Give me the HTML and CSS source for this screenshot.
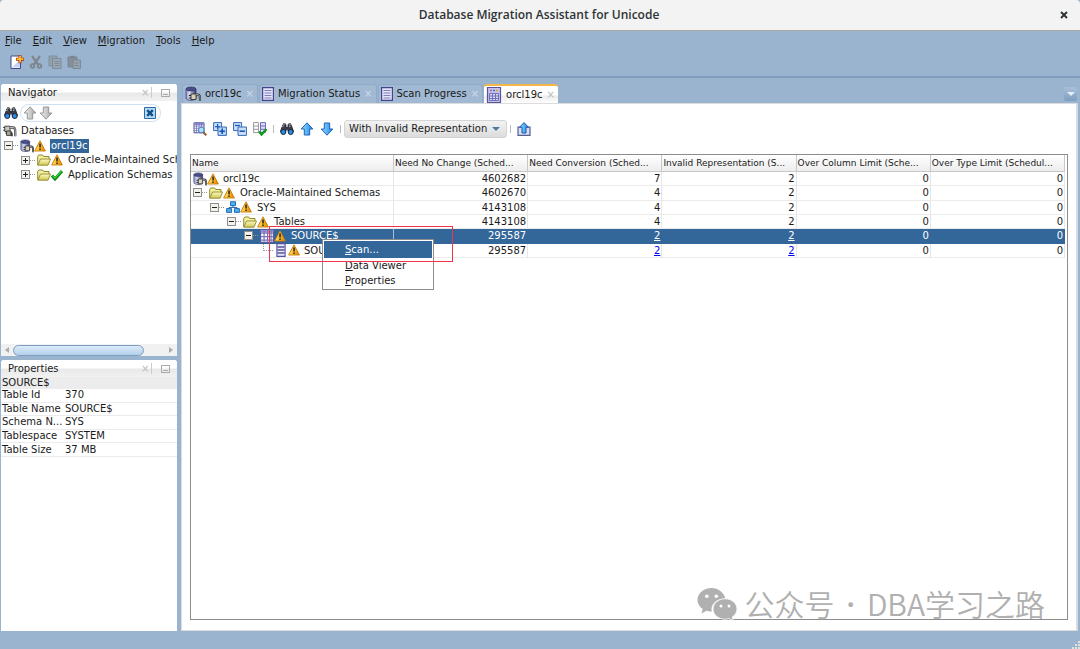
FILE: index.html
```html
<!DOCTYPE html>
<html lang="en">
<head>
  <meta charset="UTF-8">
  <title>Database Migration Assistant for Unicode</title>
  <link rel="stylesheet" href="styles.css">
</head>
<body>
  <!-- icon set -->
  <svg class="sprite" aria-hidden="true">
    <defs>
      <linearGradient id="gFolder" x1="0" y1="0" x2="0" y2="1">
        <stop offset="0" stop-color="#fdfbc4"/><stop offset="1" stop-color="#cfc653"/>
      </linearGradient>
      <linearGradient id="gWarn" x1="0" y1="0" x2="1" y2="0">
        <stop offset="0" stop-color="#ffe277"/><stop offset=".5" stop-color="#fbb81e"/><stop offset="1" stop-color="#d98300"/>
      </linearGradient>
      <linearGradient id="gBlue" x1="0" y1="0" x2="1" y2="0">
        <stop offset="0" stop-color="#9fdcff"/><stop offset="1" stop-color="#1787ea"/>
      </linearGradient>
      <linearGradient id="gDb" x1="0" y1="0" x2="1" y2="0">
        <stop offset="0" stop-color="#8f94cf"/><stop offset=".35" stop-color="#d5d8f2"/><stop offset="1" stop-color="#31356f"/>
      </linearGradient>
      <linearGradient id="gGray" x1="0" y1="0" x2="1" y2="0">
        <stop offset="0" stop-color="#f4f4f4"/><stop offset="1" stop-color="#a6a6a6"/>
      </linearGradient>
    </defs>
    <symbol id="db" viewBox="0 0 16 16">
      <path d="M1 3v9c0 3 10 3 10 0V3z" fill="url(#gDb)" stroke="#3c3f73" stroke-width=".8"/>
      <ellipse cx="6" cy="3" rx="5" ry="2" fill="#4a4f8c" stroke="#30335f" stroke-width=".7"/>
      <path d="M11 8.500h2c2 0 2 2 2 6.500" fill="none" stroke="#333" stroke-width="2.200"/>
      <path d="M6 8h5v5.500H6z" fill="#d8d2b6" stroke="#333" stroke-width=".9"/>
      <path d="M4 9.500h2M4 12h2" stroke="#222" stroke-width="1"/>
      <path d="M11 8.500h2c2 0 2 2 2 6.500" fill="none" stroke="#bbb" stroke-width=".7"/>
    </symbol>
    <symbol id="plugs" viewBox="0 0 16 14">
      <path d="M0 3h2M0 6h2M2 1.500h6v6H2z" fill="#c9c9bd" stroke="#333"/>
      <path d="M8 3h4c2 0 2 2 2 10M3 9h5c2 0 2 1 2 4" fill="none" stroke="#444" stroke-width="2.600"/>
      <path d="M8 3h4c2 0 2 2 2 10" fill="none" stroke="#ccc" stroke-width="1"/>
      <path d="M4 7h5v5H4z" fill="#aaa89d" stroke="#333"/>
    </symbol>
    <symbol id="warn" viewBox="0 0 12 12">
      <path d="M6 .8L11.400 11H.6z" fill="url(#gWarn)" stroke="#c77c0c" stroke-width=".9" stroke-linejoin="round"/>
      <path d="M5.300 3.600h1.500v4H5.300zM5.300 8.500h1.500V10H5.300z" fill="#22222c"/>
    </symbol>
    <symbol id="folder" viewBox="0 0 14 12">
      <path d="M.7 10.800V2.500l1-1.500h4l1 1.500H12v3" fill="#f3efa0" stroke="#8f8a2c"/>
      <path d="M.8 11.200L3.500 5H13.500L11 11.200z" fill="url(#gFolder)" stroke="#8f8a2c" stroke-width=".9"/>
    </symbol>
    <symbol id="check" viewBox="0 0 12 12">
      <path d="M1 6.500l3 3.500L11 2" fill="none" stroke="#0a8a12" stroke-width="3"/>
      <path d="M1.500 6.500L4 9.200 10.500 2" fill="none" stroke="#35d23c" stroke-width="1.200"/>
    </symbol>
    <symbol id="schema" viewBox="0 0 14 12">
      <path d="M7 4v3M3 9V6.500h8V9" fill="none" stroke="#356fa8"/>
      <path d="M4.500.7h5v4h-5zM.6 7.600h5v3.800h-5zM8.400 7.600h5v3.800h-5z" fill="#49b0f5" stroke="#1b62aa" stroke-width=".9"/>
    </symbol>
    <symbol id="table" viewBox="0 0 12 12">
      <path d="M.5.500h11v11H.5z" fill="#fff" stroke="#5c5aa6"/>
      <path d="M.5 1h11v2H.5z" fill="#8e8bd0"/>
      <path d="M3.500 1v10M6.500 1v10M9.500 1v10M1 3.500h10M1 6.500h10M1 9.500h10" stroke="#7472b8"/>
    </symbol>
    <symbol id="column" viewBox="0 0 10 12">
      <path d="M1.500.500h7v11h-7z" fill="#e9e9ff" stroke="#55549c"/>
      <path d="M2 3.500h6M2 6h6M2 8.500h6" stroke="#55549c" stroke-width="1.300"/>
    </symbol>
    <symbol id="doc" viewBox="0 0 12 14">
      <path d="M.6.600h10.800v12.800H.6z" fill="#e4e4fb" stroke="#45448a" stroke-width="1.200"/>
      <path d="M2.500 3.500h7M2.500 6h7M2.500 8.500h7M2.500 11h7" stroke="#7f7db8"/>
    </symbol>
    <symbol id="report" viewBox="0 0 16 16">
      <path d="M1.500.500h13v15h-13z" fill="#c4c4ee" stroke="#55549c" stroke-width="1.200"/>
      <path d="M4 3.500h2" stroke="#d2568a" stroke-width="1.500"/><path d="M7 3.500h2" stroke="#3a77d6" stroke-width="1.500"/><path d="M10 3.500h2" stroke="#d99b2b" stroke-width="1.500"/>
      <path d="M3.500 6.500h9v7h-9zM6.500 6.500v7M9.500 6.500v7M4 9h8M4 11.500h8" fill="#d9d9f8" stroke="#6a68b0" stroke-width=".9"/>
    </symbol>
    <symbol id="binoculars" viewBox="0 0 14 14">
      <path d="M3 2.500h3v3h2v-3h3l2.600 7H8.200L7.500 7h-1L5.800 9.500H.4z" fill="#3a3f49" stroke="#1d2028" stroke-width=".8"/>
      <path d="M3 1h2.500v2H3zM8.500 1H11v2H8.500z" fill="#777"/>
      <path d="M2.600 5l.8-1.500M9.500 5l.4-1.500" stroke="#ccc"/>
      <circle cx="3.300" cy="10" r="2.500" fill="#248df0" stroke="#20242c"/>
      <circle cx="10.700" cy="10" r="2.500" fill="#248df0" stroke="#20242c"/>
    </symbol>
    <symbol id="up" viewBox="0 0 14 14">
      <path d="M7 .8L12.800 7H9.700v6H4.300V7H1.200z" fill="url(#gBlue)" stroke="#1b64b5" stroke-linejoin="round"/>
    </symbol>
    <symbol id="down" viewBox="0 0 14 14">
      <path d="M7 13.200L1.200 7h3.100V1h5.400v6h3.100z" fill="url(#gBlue)" stroke="#1b64b5" stroke-linejoin="round"/>
    </symbol>
    <symbol id="upGray" viewBox="0 0 14 14">
      <path d="M7 .8L12.800 7H9.700v6H4.300V7H1.200z" fill="url(#gGray)" stroke="#979797" stroke-linejoin="round"/>
    </symbol>
    <symbol id="downGray" viewBox="0 0 14 14">
      <path d="M7 13.200L1.200 7h3.100V1h5.400v6h3.100z" fill="url(#gGray)" stroke="#979797" stroke-linejoin="round"/>
    </symbol>
    <symbol id="clear" viewBox="0 0 12 12">
      <path d="M.5.500h11v11H.5z" fill="#b6daf5" stroke="#2c6aa5"/>
      <path d="M3.200 3.200l5.600 5.600M8.800 3.200L3.200 8.800" stroke="#114f8c" stroke-width="2.400"/>
    </symbol>
    <symbol id="new" viewBox="0 0 14 14">
      <path d="M1 1h9.500v12.500H1z" fill="#fff" stroke="#3f4a8e"/>
      <path d="M2 12.500l8-8v8z" fill="#c9d3f1"/>
      <path d="M10 .2v8M6 4.200h8" stroke="#a32a10" stroke-width="3"/>
      <path d="M10 .8v6.800M6.600 4.200h6.800" stroke="#ffc22e" stroke-width="1.700"/>
    </symbol>
    <symbol id="cut" viewBox="0 0 14 14">
      <path d="M3 1l6.500 9M11 1L4.500 10" stroke="#7d858d" stroke-width="2.200" fill="none"/>
      <circle cx="3.500" cy="11" r="1.800" fill="none" stroke="#7d858d" stroke-width="1.800"/>
      <circle cx="10.500" cy="11" r="1.800" fill="none" stroke="#7d858d" stroke-width="1.800"/>
    </symbol>
    <symbol id="copy" viewBox="0 0 14 14">
      <path d="M1 1h8v10H1z" fill="#93a0ad" stroke="#8090a0"/>
      <path d="M4.500 3.500H13v10H4.500z" fill="#9aa6b2" stroke="#7e8b98"/>
      <path d="M6.500 6.500h5M6.500 8.500h5M6.500 10.500h5" stroke="#7e8b98"/>
    </symbol>
    <symbol id="paste" viewBox="0 0 14 14">
      <path d="M1 2h9v10H1z" fill="#838f9b" stroke="#7b8792"/><path d="M3.500.800h4v2h-4z" fill="#77828d"/>
      <path d="M6 5h7.400v8.500H6z" fill="#98a4b0" stroke="#7b8792"/>
      <path d="M7.500 8h4M7.500 10.500h4" stroke="#7b8792"/>
    </symbol>
    <symbol id="tableFind" viewBox="0 0 14 14">
      <path d="M1 .8h10v10H1z" fill="#fff" stroke="#4d4b98"/><path d="M1 2h10" stroke="#8e8bd0" stroke-width="2"/>
      <path d="M3.500 1v10M6 1v10M8.500 1v10M1 4h10M1 6.300h10M1 8.600h10" stroke="#7472b8" stroke-width=".8"/>
      <path d="M10 10l3.300 3.300" stroke="#9a5a28" stroke-width="2"/>
      <circle cx="8.300" cy="8" r="2.800" fill="#b5def9" stroke="#3d83c6"/>
    </symbol>
    <symbol id="expand" viewBox="0 0 14 14">
      <path d="M.6.600h8v8h-8z" fill="#c9e1fb" stroke="#3566b4"/>
      <path d="M4.600 2v5M2 4.600h5" stroke="#1d5bb8" stroke-width="1.300"/>
      <path d="M5 5h8.400v8.400H5z" fill="#b7d8fb" stroke="#3566b4"/>
      <path d="M9.200 6.500v5.400M6.500 9.200h5.400" stroke="#134fae" stroke-width="1.500"/>
    </symbol>
    <symbol id="collapse" viewBox="0 0 14 14">
      <path d="M.6.600h8v8h-8z" fill="#c9e1fb" stroke="#3566b4"/>
      <path d="M2 3.500h5" stroke="#1d5bb8" stroke-width="1.300"/>
      <path d="M5 5h8.400v8.400H5z" fill="#c7e1fc" stroke="#3566b4"/>
      <path d="M6.500 9.200h5.400" stroke="#134fae" stroke-width="1.500"/>
    </symbol>
    <symbol id="verify" viewBox="0 0 14 14">
      <path d="M.6.600h4.800v10H.6zM.6 4h4.800M.6 7.300h4.800" fill="#fff" stroke="#9a9a9a"/>
      <path d="M7.500.600h5v10h-5zM7.500 4h5M7.500 7.300h5" fill="#dcdcff" stroke="#6f6db5"/>
      <path d="M6 9.500l2.500 3L13.500 7" fill="none" stroke="#129a18" stroke-width="2.400"/>
    </symbol>
    <symbol id="export" viewBox="0 0 14 14">
      <path d="M3 5H1v8.300h12V5h-2" fill="#d7deef" stroke="#555f93" stroke-width="1.200"/>
      <path d="M7 .6L11.500 5.300H9V11H5V5.300H2.500z" fill="url(#gBlue)" stroke="#1b55a5"/>
    </symbol>
    <symbol id="wechat" viewBox="0 0 40 34">
      <path fill="#b0b0b0" d="M14.500 1C6.800 1 .5 6.300.5 12.900c0 3.700 2 6.900 5.200 9.100L4.400 26.400l5-2.600c1.800.6 3.500.8 5.400.7C13 17.500 19.200 11.500 28.400 11.400 26.800 5.400 21.100 1 14.500 1z"/>
      <path fill="#b0b0b0" stroke="#fff" stroke-width=".8" d="M28 11.800c-6.700 0-12 4.500-12 10.200s5.300 10.200 12 10.200c1.400 0 2.700-.2 3.900-.6l4.500 2.400-1.200-3.900c3-1.900 4.800-4.800 4.800-8.100 0-5.700-5.300-10.200-12-10.200z"/>
      <g fill="#fff"><circle cx="9.800" cy="9.300" r="1.800"/><circle cx="19.300" cy="9.300" r="1.800"/><circle cx="24" cy="19" r="1.500"/><circle cx="32" cy="19" r="1.500"/></g>
    </symbol>
  </svg>

  <header class="titlebar">
    <h1>Database Migration Assistant for Unicode</h1>
    <button class="close" type="button" aria-label="Close window">
      <svg width="8" height="8" viewBox="0 0 8 8"><path d="M1 1l6 6M7 1L1 7" stroke="#2e3436" stroke-width="2"/></svg>
    </button>
  </header>

  <div class="topbars">
    <nav class="menubar">
      <button type="button"><u>F</u>ile</button>
      <button type="button"><u>E</u>dit</button>
      <button type="button"><u>V</u>iew</button>
      <button type="button"><u>M</u>igration</button>
      <button type="button"><u>T</u>ools</button>
      <button type="button"><u>H</u>elp</button>
    </nav>
    <div class="toolbar">
      <button type="button" aria-label="New"><svg class="i14"><use href="#new"/></svg></button>
      <button type="button" aria-label="Cut" disabled><svg class="i14"><use href="#cut"/></svg></button>
      <button type="button" aria-label="Copy" disabled><svg class="i14"><use href="#copy"/></svg></button>
      <button type="button" aria-label="Paste" disabled><svg class="i14"><use href="#paste"/></svg></button>
    </div>
  </div>

  <main class="workspace">
    <aside class="side">
      <section class="panel navigator">
        <div class="panel_head">
          <h2>Navigator</h2>
          <button class="x" type="button" aria-label="Close navigator">×</button>
          <button class="min" type="button" aria-label="Minimize navigator"></button>
        </div>
        <div class="find">
          <svg class="i14"><use href="#binoculars"/></svg>
          <div class="find_box">
            <button type="button" aria-label="Previous"><svg class="i14"><use href="#upGray"/></svg></button>
            <button type="button" aria-label="Next"><svg class="i14"><use href="#downGray"/></svg></button>
            <input type="text" aria-label="Find">
            <button type="button" aria-label="Clear"><svg class="i12"><use href="#clear"/></svg></button>
          </div>
        </div>
        <div class="nav_tree">
          <div class="node"><svg class="i14"><use href="#plugs"/></svg><span class="label">Databases</span></div>
          <div class="node lv0"><i class="toggle minus"></i><i class="dots"></i><svg class="i14"><use href="#db"/></svg><svg class="i12"><use href="#warn"/></svg><span class="label picked">orcl19c</span></div>
          <div class="node lv1"><i class="toggle plus"></i><i class="dots"></i><svg class="i14"><use href="#folder"/></svg><svg class="i12"><use href="#warn"/></svg><span class="label">Oracle-Maintained Schemas</span></div>
          <div class="node lv1"><i class="toggle plus"></i><i class="dots"></i><svg class="i14"><use href="#folder"/></svg><svg class="i12"><use href="#check"/></svg><span class="label">Application Schemas</span></div>
        </div>
        <div class="scrollbar">
          <i class="arrow left"></i><div class="track"><div class="thumb"></div></div><i class="arrow right"></i>
        </div>
      </section>

      <section class="panel properties">
        <div class="panel_head">
          <h2>Properties</h2>
          <button class="x" type="button" aria-label="Close properties">×</button>
          <button class="min" type="button" aria-label="Minimize properties"></button>
        </div>
        <table class="props">
          <caption>SOURCE$</caption>
          <tr><th>Table Id</th><td>370</td></tr>
          <tr><th>Table Name</th><td>SOURCE$</td></tr>
          <tr><th>Schema N...</th><td>SYS</td></tr>
          <tr><th>Tablespace</th><td>SYSTEM</td></tr>
          <tr><th>Table Size</th><td>37 MB</td></tr>
        </table>
      </section>
    </aside>

    <section class="editor">
      <div class="tabs">
        <button class="tab" type="button"><svg class="i16"><use href="#db"/></svg><span>orcl19c</span><i>×</i></button>
        <button class="tab" type="button"><svg class="i12 doc"><use href="#doc"/></svg><span>Migration Status</span><i>×</i></button>
        <button class="tab" type="button"><svg class="i12 doc"><use href="#doc"/></svg><span>Scan Progress</span><i>×</i></button>
        <button class="tab active" type="button"><svg class="i16"><use href="#report"/></svg><span>orcl19c</span><i>×</i></button>
        <button class="tab_list" type="button" aria-label="Tab list"></button>
      </div>

      <div class="pane">
        <div class="actions">
          <button type="button" aria-label="Show data"><svg class="i14"><use href="#tableFind"/></svg></button>
          <button type="button" aria-label="Expand all"><svg class="i14"><use href="#expand"/></svg></button>
          <button type="button" aria-label="Collapse all"><svg class="i14"><use href="#collapse"/></svg></button>
          <button type="button" aria-label="Select columns"><svg class="i14"><use href="#verify"/></svg></button>
          <i class="sep"></i>
          <button type="button" aria-label="Find"><svg class="i14"><use href="#binoculars"/></svg></button>
          <button type="button" aria-label="Previous"><svg class="i14"><use href="#up"/></svg></button>
          <button type="button" aria-label="Next"><svg class="i14"><use href="#down"/></svg></button>
          <i class="sep"></i>
          <div class="filter">
            <select aria-label="Filter"><option>With Invalid Representation</option></select>
          </div>
          <i class="sep"></i>
          <button type="button" aria-label="Export"><svg class="i14"><use href="#export"/></svg></button>
        </div>

        <div class="report">
          <table class="grid">
            <thead>
              <tr>
                <th class="name">Name</th>
                <th>Need No Change (Sched...</th>
                <th>Need Conversion (Sched...</th>
                <th>Invalid Representation (S...</th>
                <th>Over Column Limit (Sche...</th>
                <th>Over Type Limit (Schedul...</th>
              </tr>
            </thead>
            <tbody>
              <tr>
                <td><div class="node"><svg class="i14"><use href="#db"/></svg><svg class="i12"><use href="#warn"/></svg><span class="label">orcl19c</span></div></td>
                <td>4602682</td><td>7</td><td>2</td><td>0</td><td>0</td>
              </tr>
              <tr>
                <td><div class="node lv0"><i class="toggle minus"></i><i class="dots"></i><svg class="i14"><use href="#folder"/></svg><svg class="i12"><use href="#warn"/></svg><span class="label">Oracle-Maintained Schemas</span></div></td>
                <td>4602670</td><td>4</td><td>2</td><td>0</td><td>0</td>
              </tr>
              <tr>
                <td><div class="node lv1"><i class="toggle minus"></i><i class="dots"></i><svg class="i14"><use href="#schema"/></svg><svg class="i12"><use href="#warn"/></svg><span class="label">SYS</span></div></td>
                <td>4143108</td><td>4</td><td>2</td><td>0</td><td>0</td>
              </tr>
              <tr>
                <td><div class="node lv2"><i class="toggle minus"></i><i class="dots"></i><svg class="i14"><use href="#folder"/></svg><svg class="i12"><use href="#warn"/></svg><span class="label">Tables</span></div></td>
                <td>4143108</td><td>4</td><td>2</td><td>0</td><td>0</td>
              </tr>
              <tr class="selected">
                <td><div class="node lv3"><i class="toggle minus"></i><i class="dots"></i><svg class="i14"><use href="#table"/></svg><svg class="i12"><use href="#warn"/></svg><span class="label">SOURCE$</span></div></td>
                <td>295587</td><td><a href="#">2</a></td><td><a href="#">2</a></td><td>0</td><td>0</td>
              </tr>
              <tr>
                <td><div class="node leaf"><i class="elbow"></i><svg class="i14"><use href="#column"/></svg><svg class="i12"><use href="#warn"/></svg><span class="label">SOU</span></div></td>
                <td>295587</td><td><a href="#">2</a></td><td><a href="#">2</a></td><td>0</td><td>0</td>
              </tr>
            </tbody>
          </table>

          <div class="context_menu">
            <button class="hover" type="button"><u>S</u>can...</button>
            <button type="button"><u>D</u>ata Viewer</button>
            <button type="button"><u>P</u>roperties</button>
          </div>
          <div class="marker"></div>
          <div class="watermark"><svg width="40" height="34"><use href="#wechat"/></svg><p>公众号<span>·</span>DBA学习之路</p></div>
        </div>
      </div>
    </section>
  </main>

  <footer class="statusbar">
    <svg width="8" height="8" viewBox="0 0 8 8"><path d="M6 0h2v2H6zM6 3h2v2H6zM6 6h2v2H6zM3 3h2v2H3zM3 6h2v2H3zM0 6h2v2H0z" fill="#dfe3dc"/></svg>
  </footer>
</body>
</html>
```
FILE: styles.css
```css
* { box-sizing: border-box; }

body {
  display: flex;
  flex-direction: column;
  height: 100vh;
  margin: 0;
  overflow: hidden;
  background: #9ab4cf;
  color: #1a1a1a;
  font: 10px/14px "DejaVu Sans", sans-serif;
}

button, input, select {
  margin: 0;
  padding: 0;
  border: 0;
  background: none;
  color: inherit;
  font: inherit;
}
h1, h2, p { margin: 0; }
svg { display: block; flex: none; }
.sprite { position: absolute; width: 0; height: 0; }
.i12 { width: 12px; height: 12px; }
.i14 { width: 14px; height: 14px; }
.i16 { width: 16px; height: 16px; }
.doc { height: 14px; }

/* window title */
.titlebar {
  display: flex;
  align-items: center;
  height: 31px;
  padding: 0 10px;
  border-bottom: 1px solid #a9a9a3;
  border-radius: 4px 4px 0 0;
  background: #f3f3f3;
}
  .titlebar h1 {
    flex: 1;
    padding-left: 8px;
    text-align: center;
    color: #2e3436;
    font: 600 12px/16px "Open Sans", "Noto Sans", sans-serif;
  }
  .close { width: 10px; }

/* menu and main toolbar */
.topbars {
  height: 47px;
  border-bottom: 2px solid #7f9cbf;
}
.menubar {
  display: flex;
  gap: 11px;
  padding: 3px 5px;
}
.toolbar {
  display: flex;
  gap: 5px;
  padding: 4px 10px;
}

.workspace {
  display: flex;
  flex: 1;
  min-height: 0;
  gap: 4px;
  padding: 6px 2px 0 1px;
}

/* left column */
.side {
  display: flex;
  flex-direction: column;
  gap: 4px;
  width: 176px;
}
.panel {
  display: flex;
  flex-direction: column;
  overflow: hidden;
  border-radius: 3px 3px 0 0;
  background: #fff;
}
.navigator { height: 272px; }
.properties { flex: 1; }
.panel_head {
  display: flex;
  align-items: center;
  height: 17px;
  padding: 0 7px;
  background: linear-gradient(#fff 45%, #e9e9e9 55%, #f1f1f1);
}
  .panel_head h2 {
    flex: 1;
    font: inherit;
  }
  .panel_head .x {
    width: 11px;
    border-right: 1px solid #ccc;
    padding-right: 4px;
    color: #bbb;
    line-height: 11px;
  }
  .panel_head .min {
    width: 9px;
    height: 8px;
    margin-left: 9px;
    border: 1px solid #aaa;
    background: linear-gradient(#aaa, #aaa) center 4px / 5px 1px no-repeat;
  }
.find {
  display: flex;
  align-items: center;
  gap: 2px;
  padding: 3px 16px 2px 3px;
}
  .find_box {
    display: flex;
    flex: 1;
    align-items: center;
    gap: 2px;
    min-width: 0;
    height: 18px;
    padding: 0 4px 0 2px;
    border: 1px solid #cfe0f2;
    border-radius: 9px;
  }
  .find_box input {
    flex: 1;
    min-width: 0;
    outline: none;
  }

/* tree rows, shared by navigator and report */
.nav_tree {
  display: grid;
  grid-template-rows: repeat(4, 1fr);
  height: 58px;
}
.node {
  display: flex;
  align-items: center;
  height: 14px;
  padding-left: 2px;
  white-space: nowrap;
}
.nav_tree .node { height: auto; }
.nav_tree .lv0 { padding-left: 3px; }
.nav_tree .lv1 { padding-left: 20px; }
.lv1 { padding-left: 19px; }
.lv2 { padding-left: 36px; }
.lv3 { padding-left: 53px; }
.leaf { padding-left: 72px; }
.label { margin-left: 3px; padding: 0 1px; }
.lv0 .label, .lv1 .label, .lv2 .label, .lv3 .label { margin-left: 4px; }
.picked {
  background: #336699;
  color: #fff;
}
.toggle {
  flex: none;
  width: 9px;
  height: 9px;
  border: 1px solid #8f8f8f;
  background: linear-gradient(#222, #222) center / 5px 1px no-repeat, #f3f1ea;
}
.toggle.plus {
  background: linear-gradient(#222, #222) center / 5px 1px no-repeat, linear-gradient(#222, #222) center / 1px 5px no-repeat, #f3f1ea;
}
.dots {
  flex: none;
  width: 5px;
  margin-right: 2px;
  border-top: 1px dotted #999;
}
.elbow {
  width: 10px;
  height: 7px;
  margin: -6px 1px 0 0;
  border: dotted #999;
  border-width: 0 0 1px 1px;
}

.scrollbar {
  display: flex;
  align-items: center;
  height: 12px;
  margin-top: auto;
  padding: 0 4px;
  background: #f1f1f1;
}
  .track { flex: 1; padding: 0 25px 0 4px; }
  .thumb {
    height: 11px;
    border: 1px solid #7d9dc3;
    border-radius: 6px;
    background: linear-gradient(#dcebfa, #b3cfea);
  }
  .arrow {
    border: solid transparent;
    border-width: 3px 4px;
  }
  .arrow.left { border-left: 0; border-right-color: #aaa; }
  .arrow.right { border-right: 0; border-left-color: #aaa; }

.props {
  width: 100%;
  height: 68px;
  border-collapse: separate;
  border-spacing: 0;
  line-height: 12px;
}
  .props caption {
    padding-left: 1px;
    background: #ececec;
    text-align: left;
  }
  .props th, .props td {
    padding: 0 1px;
    border-bottom: 1px solid #ebebeb;
    font-weight: normal;
    text-align: left;
    white-space: nowrap;
  }
  .props th { width: 63px; }

/* editor tabs */
.editor {
  display: flex;
  flex: 1;
  flex-direction: column;
  min-width: 0;
}
.tabs {
  display: flex;
  gap: 1px;
  height: 19px;
  padding: 0 1px;
}
.tab {
  display: flex;
  align-items: center;
  padding: 0 3px 0 2px;
  border: 1px solid #8fabc9;
  border-width: 1px 1px 0;
  border-radius: 3px 3px 0 0;
  background: #a1b9d3;
}
  .tab span { margin: 0 4px; }
  .tab i {
    color: #cfdce9;
    font-style: normal;
    line-height: 10px;
  }
  .tab.active {
    border: 0;
    border-top: 2px solid #f5b648;
    background: linear-gradient(#fff 50%, #ececec 60%, #fff);
  }
  .tab.active i { color: #bbb; }
.tab_list {
  width: 13px;
  height: 14px;
  margin: 3px 0 0 auto;
  border-radius: 2px;
  background: linear-gradient(#a9c0da, #7f9dc0);
}
  .tab_list::after {
    content: "";
    display: block;
    width: 0;
    margin: 0 auto;
    border: 4px solid transparent;
    border-top-color: #e6eef6;
    border-bottom: 0;
  }

.pane {
  display: flex;
  flex: 1;
  flex-direction: column;
  gap: 16px;
  padding: 16px 8px 10px 8px;
  border: 1px solid #dcdcdc;
  border-right: 2px solid #d6dade;
  background: #fff;
}
.actions {
  display: flex;
  align-items: center;
  height: 18px;
}
  .actions button { padding: 0 3px; }
  .sep {
    width: 1px;
    height: 8px;
    margin: 0 3px;
    background: #bbb;
  }
.filter {
  position: relative;
}
  .filter select {
    width: 163px;
    height: 18px;
    padding: 0 4px;
    border: 1px solid #d5d5d5;
    border-radius: 3px;
    appearance: none;
    background: linear-gradient(#f3f3f3, #dcdcdc);
  }
  .filter::after {
    content: "";
    position: absolute;
    top: 7px;
    right: 7px;
    border: 4px solid transparent;
    border-top-color: #4f77a8;
    border-bottom: 0;
  }

/* scan report */
.report {
  position: relative;
  flex: 1;
  padding-right: 2px;
  border: 1px solid #8c8c8c;
}
.grid {
  width: 100%;
  height: 103px;
  border-collapse: separate;
  border-spacing: 0;
  table-layout: fixed;
}
  .grid th, .grid td {
    padding: 0 1px;
    border-right: 1px solid #e6e6e6;
    border-bottom: 1px solid #ebebeb;
    line-height: 13px;
    white-space: nowrap;
  }
  .grid th {
    height: 17px;
    border-color: #c8c8c8;
    background: linear-gradient(#fff, #ededed);
    font-size: 9px;
    font-weight: normal;
    text-align: left;
  }
  .grid .name { width: 203px; }
  .grid td { text-align: right; }
  .grid td:first-child { padding: 0; }
  .grid .node { height: 13px; }
  .grid a { color: #0000ff; }
  .grid .selected td {
    border-color: #336699;
    background: #336699;
    color: #fff;
  }
  .grid .selected td:first-child { border-right-color: #a9bfd5; }
  .grid .selected a { color: #fff; }

.context_menu {
  position: absolute;
  top: 84px;
  left: 131px;
  display: flex;
  flex-direction: column;
  width: 112px;
  padding: 1px;
  border: 1px solid #8c8c8c;
  background: #fff;
}
  .context_menu button {
    height: 15px;
    padding-left: 21px;
    line-height: 14px;
    text-align: left;
  }
  .context_menu .hover {
    height: 17px;
    background: #336699;
    color: #fff;
  }
.marker {
  position: absolute;
  top: 71px;
  left: 78px;
  width: 184px;
  height: 36px;
  border: 1px solid #f0354b;
  pointer-events: none;
}
.watermark {
  position: absolute;
  right: 22px;
  bottom: -6px;
  display: flex;
  align-items: center;
  gap: 8px;
  color: #b0b0b0;
  font: 350 30px/40px "Noto Sans CJK SC", sans-serif;
  white-space: nowrap;
}
  .watermark span {
    margin: 0 12px;
    font-family: "Noto Sans", sans-serif;
    font-weight: 600;
  }

.statusbar {
  display: flex;
  align-items: flex-end;
  justify-content: flex-end;
  height: 18px;
}
```
